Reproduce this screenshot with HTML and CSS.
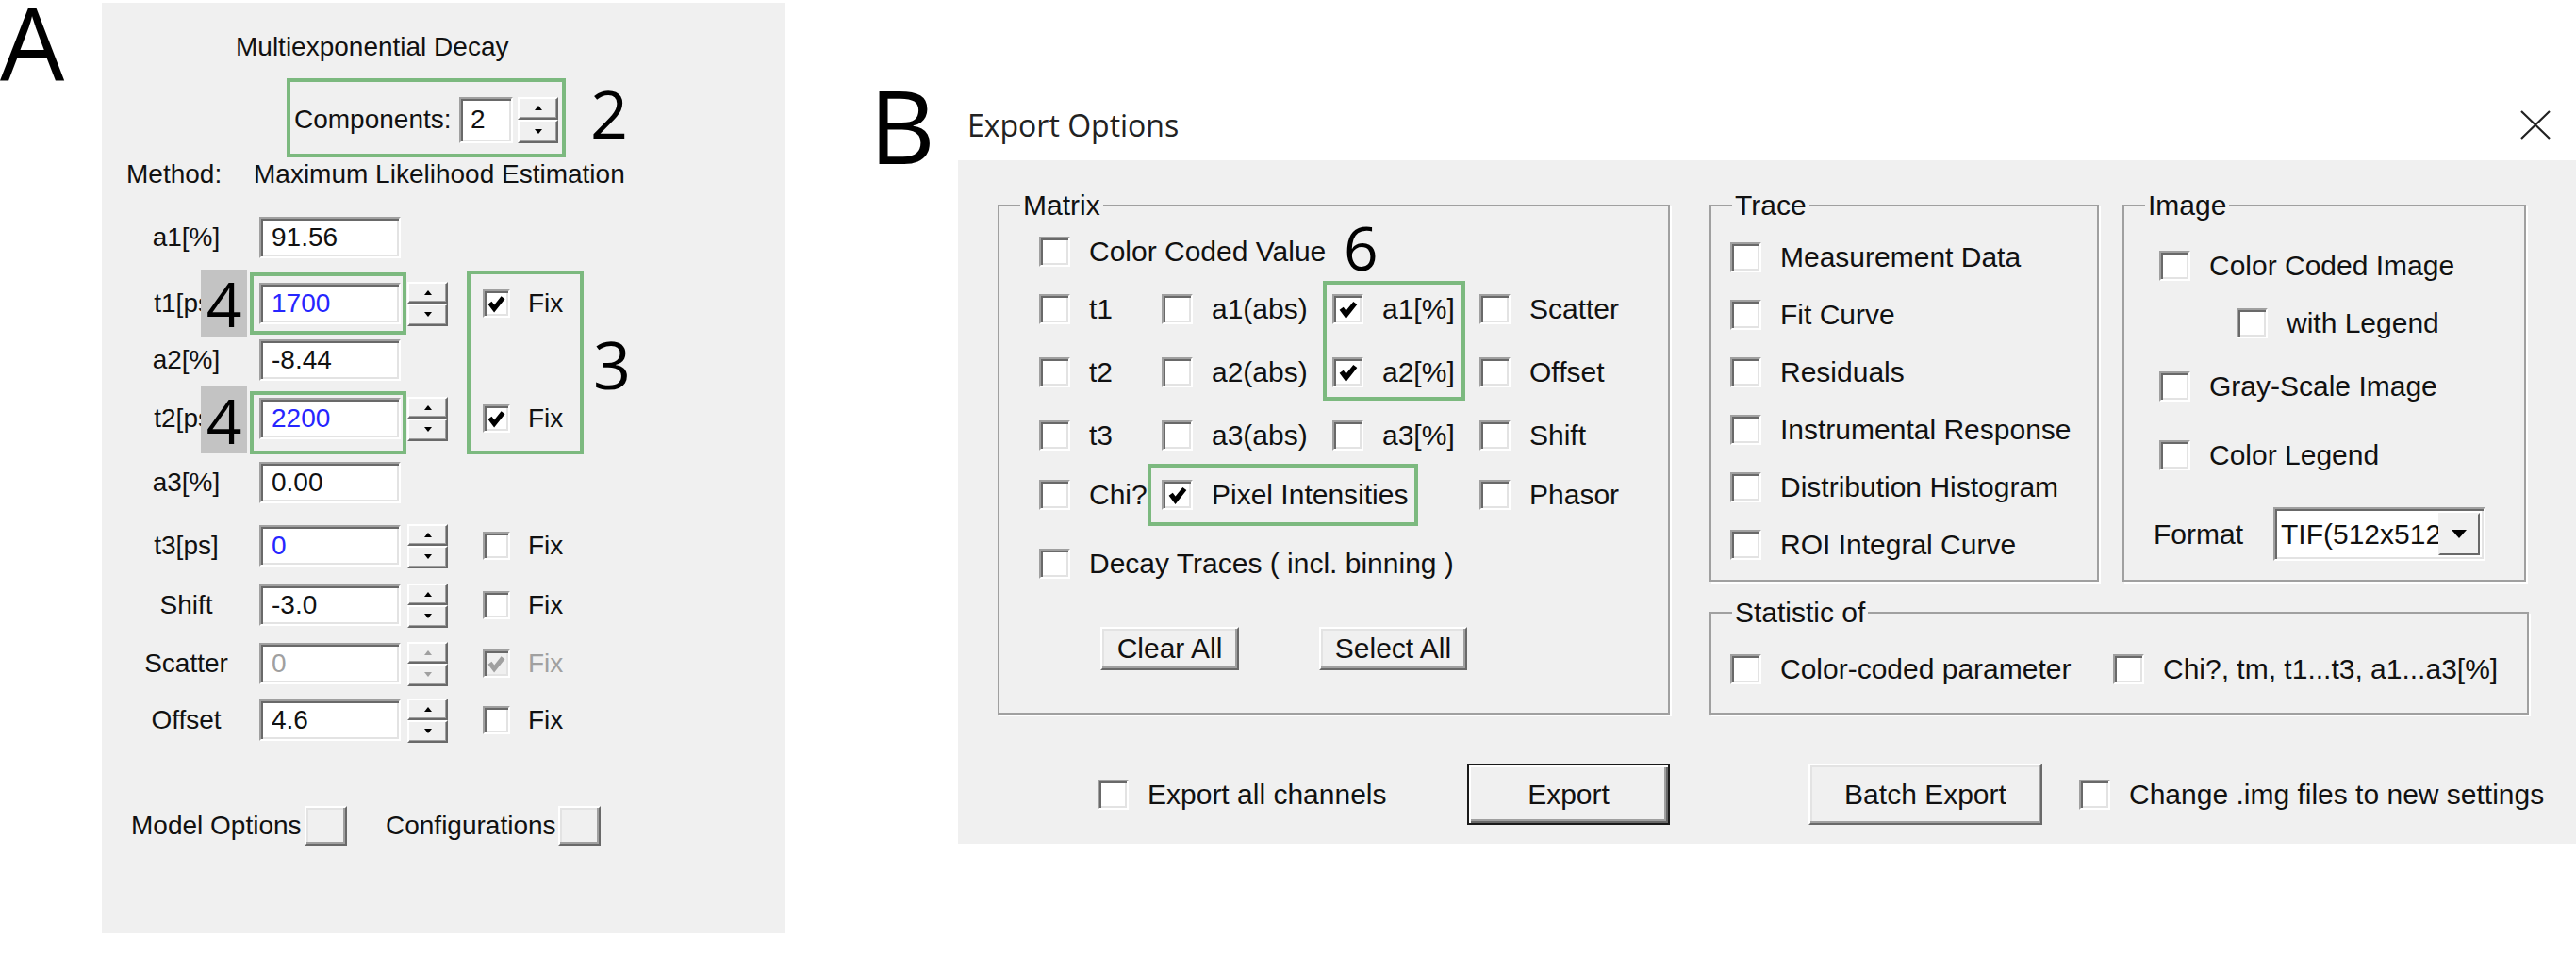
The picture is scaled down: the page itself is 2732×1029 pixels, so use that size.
FILE: index.html
```html
<!DOCTYPE html>
<html lang="en">
<head>
  <meta charset="UTF-8">
  <title>Multiexponential Decay / Export Options</title>
  <link rel="stylesheet" href="styles.css">
</head>
<body>
<div class="page">

  <!-- A: fit parameters -->
  <div class="fig-a">
    <div class="letter">A</div>
    <div class="panel-a">
      <div class="a-title">Multiexponential Decay</div>
      <div class="a-comp">
        <span class="lbl">Components:</span>
        <span class="field">2</span>
        <span class="spin"><span class="spin-btn up"></span><span class="spin-btn down"></span></span>
      </div>
      <div class="a-method"><span class="lbl">Method:</span><span>Maximum Likelihood Estimation</span></div>

      <div class="params">
        <div class="param"><span class="name">a1[%]</span><span class="field">91.56</span></div>
        <div class="param">
          <span class="name">t1[ps]</span><span class="field blue">1700</span>
          <span class="spin"><span class="spin-btn up"></span><span class="spin-btn down"></span></span>
          <span class="check"><svg viewBox="0 0 16 16"><path d="M3.5 7.5 L6.5 11.5 L12.5 4"/></svg></span><span class="fix">Fix</span>
        </div>
        <div class="param"><span class="name">a2[%]</span><span class="field">-8.44</span></div>
        <div class="param">
          <span class="name">t2[ps]</span><span class="field blue">2200</span>
          <span class="spin"><span class="spin-btn up"></span><span class="spin-btn down"></span></span>
          <span class="check"><svg viewBox="0 0 16 16"><path d="M3.5 7.5 L6.5 11.5 L12.5 4"/></svg></span><span class="fix">Fix</span>
        </div>
        <div class="param"><span class="name">a3[%]</span><span class="field">0.00</span></div>
        <div class="param">
          <span class="name">t3[ps]</span><span class="field blue">0</span>
          <span class="spin"><span class="spin-btn up"></span><span class="spin-btn down"></span></span>
          <span class="check"></span><span class="fix">Fix</span>
        </div>
        <div class="param">
          <span class="name">Shift</span><span class="field">-3.0</span>
          <span class="spin"><span class="spin-btn up"></span><span class="spin-btn down"></span></span>
          <span class="check"></span><span class="fix">Fix</span>
        </div>
        <div class="param">
          <span class="name">Scatter</span><span class="field dim">0</span>
          <span class="spin off"><span class="spin-btn up"></span><span class="spin-btn down"></span></span>
          <span class="check off"><svg viewBox="0 0 16 16"><path d="M3.5 7.5 L6.5 11.5 L12.5 4"/></svg></span><span class="fix dim">Fix</span>
        </div>
        <div class="param">
          <span class="name">Offset</span><span class="field">4.6</span>
          <span class="spin"><span class="spin-btn up"></span><span class="spin-btn down"></span></span>
          <span class="check"></span><span class="fix">Fix</span>
        </div>
      </div>

      <div class="a-model">
        <span class="lbl">Model Options</span><span class="btn small"></span>
        <span class="lbl conf">Configurations</span><span class="btn small"></span>
      </div>

      <!-- annotations -->
      <div class="mark box-comp"></div>
      <div class="num num-2">2</div>
      <div class="tag tag-t1">4</div>
      <div class="tag tag-t2">4</div>
      <div class="mark box-t1"></div>
      <div class="mark box-t2"></div>
      <div class="mark box-fix"></div>
      <div class="num num-3">3</div>
    </div>
  </div>

  <!-- B: export dialog -->
  <div class="fig-b">
    <div class="letter">B</div>
    <div class="dialog">
      <div class="titlebar">
        <span>Export Options</span>
        <svg class="close" viewBox="0 0 34 31"><path d="M2 1 L32 30 M32 1 L2 30"/></svg>
      </div>
      <div class="dialog-body">
        <div class="body-top">
          <fieldset class="group matrix">
            <legend>Matrix</legend>
            <div class="matrix-grid">
              <label class="opt wide"><span class="check"></span>Color Coded Value</label>
              <label class="opt"><span class="check"></span>t1</label>
              <label class="opt"><span class="check"></span>a1(abs)</label>
              <label class="opt"><span class="check"><svg viewBox="0 0 16 16"><path d="M3.5 7.5 L6.5 11.5 L12.5 4"/></svg></span>a1[%]</label>
              <label class="opt"><span class="check"></span>Scatter</label>
              <label class="opt"><span class="check"></span>t2</label>
              <label class="opt"><span class="check"></span>a2(abs)</label>
              <label class="opt"><span class="check"><svg viewBox="0 0 16 16"><path d="M3.5 7.5 L6.5 11.5 L12.5 4"/></svg></span>a2[%]</label>
              <label class="opt"><span class="check"></span>Offset</label>
              <label class="opt"><span class="check"></span>t3</label>
              <label class="opt"><span class="check"></span>a3(abs)</label>
              <label class="opt"><span class="check"></span>a3[%]</label>
              <label class="opt"><span class="check"></span>Shift</label>
              <label class="opt"><span class="check"></span>Chi?</label>
              <label class="opt span2"><span class="check"><svg viewBox="0 0 16 16"><path d="M3.5 7.5 L6.5 11.5 L12.5 4"/></svg></span>Pixel Intensities</label>
              <label class="opt"><span class="check"></span>Phasor</label>
              <label class="opt wide"><span class="check"></span>Decay Traces ( incl. binning )</label>
            </div>
            <div class="matrix-btns">
              <button class="btn clear">Clear All</button>
              <button class="btn select">Select All</button>
            </div>
          </fieldset>

          <div class="right-col">
            <div class="right-top">
              <fieldset class="group trace">
                <legend>Trace</legend>
                <div class="trace-list">
                  <label class="opt"><span class="check"></span>Measurement Data</label>
                  <label class="opt"><span class="check"></span>Fit Curve</label>
                  <label class="opt"><span class="check"></span>Residuals</label>
                  <label class="opt"><span class="check"></span>Instrumental Response</label>
                  <label class="opt"><span class="check"></span>Distribution Histogram</label>
                  <label class="opt"><span class="check"></span>ROI Integral Curve</label>
                </div>
              </fieldset>
              <fieldset class="group image">
                <legend>Image</legend>
                <div class="image-grid">
                  <label class="opt"><span class="check"></span>Color Coded Image</label>
                  <label class="opt sub"><span class="check"></span>with Legend</label>
                  <label class="opt"><span class="check"></span>Gray-Scale Image</label>
                  <label class="opt"><span class="check"></span>Color Legend</label>
                  <div class="format">
                    <span class="format-lbl">Format</span>
                    <span class="combo"><span class="combo-text">TIF(512x512)</span><span class="combo-btn"></span></span>
                  </div>
                </div>
              </fieldset>
            </div>
            <fieldset class="group stats">
              <legend>Statistic of</legend>
              <div class="stats-row">
                <label class="opt first"><span class="check"></span>Color-coded parameter</label>
                <label class="opt"><span class="check"></span>Chi?, tm, t1...t3, a1...a3[%]</label>
              </div>
            </fieldset>
          </div>
        </div>

        <div class="bottom-row">
          <label class="opt all"><span class="check"></span>Export all channels</label>
          <button class="btn default export">Export</button>
          <button class="btn batch">Batch Export</button>
          <label class="opt"><span class="check"></span>Change .img files to new settings</label>
        </div>

        <!-- annotations -->
        <div class="num num-6">6</div>
        <div class="mark box-pct"></div>
        <div class="mark box-pix"></div>
      </div>
    </div>
  </div>

</div>
</body>
</html>
```

FILE: styles.css
```css
* {
  box-sizing: border-box;
}
body {
  margin: 0;
  background: #fff;
  color: #111;
  font-family: "Liberation Sans", Arial, sans-serif;
}
.page {
  display: flex;
  align-items: flex-start;
  width: 2732px;
  height: 1029px;
  overflow: hidden;
}
.letter {
  font-family: "Open Sans", sans-serif;
  font-size: 108px;
  line-height: 90px;
  color: #000;
}

/* ---------- A ---------- */
.fig-a {
  display: flex;
  align-items: flex-start;
}
.fig-a .letter {
  width: 108px;
}
.panel-a {
  position: relative;
  width: 725px;
  height: 987px;
  margin-top: 3px;
  background: #f0f0f0;
  font-size: 28px;
  line-height: 34px;
}
.a-title {
  height: 34px;
  margin: 30px 0 0 142px;
}
.a-comp {
  display: flex;
  align-items: center;
  height: 50px;
  margin: 35px 0 0 204px;
}
.a-comp .lbl {
  width: 175px;
}
.a-comp .field {
  width: 57px;
  height: 49px;
  padding-left: 10px;
}
.a-comp .spin {
  width: 43px;
  height: 49px;
  margin-left: 5px;
}
.a-method {
  display: flex;
  height: 34px;
  margin: 16px 0 0 26px;
}
.a-method .lbl {
  width: 135px;
}
.params {
  display: grid;
  grid-template-rows: 70px 60px 62px 68px 67px 63px 62px 60px 44px;
  margin-top: 28px;
  padding-left: 42px;
}
.param {
  display: flex;
  align-items: center;
  height: 44px;
}
.param .name {
  width: 95px;
  text-align: center;
  white-space: nowrap;
}
.param .field {
  width: 150px;
  height: 44px;
  margin-left: 30px;
}
.param .spin {
  width: 43px;
  height: 47px;
  margin-left: 7px;
}
.param .check {
  width: 29px;
  height: 30px;
  margin-left: 37px;
}
.fix {
  margin-left: 19px;
}
.dim {
  color: #a0a0a0;
}
.a-model {
  display: flex;
  align-items: center;
  height: 42px;
  margin: 69px 0 0 31px;
}
.a-model .lbl {
  width: 184px;
  white-space: nowrap;
}
.a-model .conf {
  width: 183px;
  margin-left: 41px;
}
.btn.small {
  width: 45px;
  height: 42px;
}

/* ---------- common controls ---------- */
.field {
  display: flex;
  align-items: center;
  padding-left: 11px;
  background: #fff;
  border: 2px solid;
  border-color: #a0a0a0 #fff #fff #a0a0a0;
  box-shadow: inset 2px 2px 0 #696969, inset -2px -2px 0 #e3e3e3;
  overflow: hidden;
  white-space: nowrap;
}
.field.blue {
  color: #2626ff;
}
.spin {
  display: flex;
  flex-direction: column;
}
.spin-btn {
  flex: 1;
  display: flex;
  align-items: center;
  justify-content: center;
  background: #f0f0f0;
  border: 2px solid;
  border-color: #fff #696969 #696969 #fff;
  box-shadow: inset -1px -1px 0 #a0a0a0;
}
.spin-btn::after {
  content: "";
  border-left: 4px solid transparent;
  border-right: 4px solid transparent;
}
.spin-btn.up::after {
  border-bottom: 5px solid #000;
}
.spin-btn.down::after {
  border-top: 5px solid #000;
}
.spin.off .spin-btn.up::after {
  border-bottom-color: #a0a0a0;
}
.spin.off .spin-btn.down::after {
  border-top-color: #a0a0a0;
}
.check {
  flex: none;
  display: flex;
  align-items: center;
  justify-content: center;
  width: 33px;
  height: 32px;
  background: #fff;
  border: 2px solid;
  border-color: #a0a0a0 #fff #fff #a0a0a0;
  box-shadow: inset 2px 2px 0 #696969, inset -2px -2px 0 #e3e3e3;
}
.check svg {
  width: 26px;
  height: 26px;
  fill: none;
  stroke: #000;
  stroke-width: 3.2;
}
.check.off {
  background: #f0f0f0;
}
.check.off svg {
  stroke: #a0a0a0;
}
.btn {
  display: flex;
  align-items: center;
  justify-content: center;
  padding: 0;
  font: inherit;
  color: #111;
  background: #f0f0f0;
  border: 2px solid;
  border-color: #fff #696969 #696969 #fff;
  box-shadow: inset -2px -2px 0 #a0a0a0, inset 2px 2px 0 #e3e3e3;
}
.btn.default {
  border-color: #1a1a1a;
  box-shadow: inset 2px 2px 0 #fff, inset -2px -2px 0 #696969, inset -4px -4px 0 #a0a0a0;
}

/* ---------- B ---------- */
.fig-b {
  display: flex;
  align-items: flex-start;
  margin-left: 89px;
}
.fig-b .letter {
  width: 94px;
  margin-top: 88px;
}
.dialog {
  width: 1716px;
  margin-top: 95px;
}
.titlebar {
  display: flex;
  align-items: center;
  justify-content: space-between;
  height: 75px;
  padding: 0 26px 0 10px;
  background: #fff;
  font-family: "Open Sans", sans-serif;
  font-size: 32px;
  color: #222;
}
.close {
  width: 34px;
  height: 31px;
  fill: none;
  stroke: #222;
  stroke-width: 2.2;
}
.dialog-body {
  position: relative;
  height: 725px;
  padding: 30px 0 0 42px;
  background: #f0f0f0;
  font-size: 30px;
  line-height: 34px;
}
.body-top {
  display: flex;
  align-items: flex-start;
  gap: 42px;
}
.group {
  margin: 0;
  padding: 0;
  min-width: 0;
  border: 2px solid #a0a0a0;
  box-shadow: 2px 2px 0 #fff;
}
.group legend {
  height: 36px;
  margin-left: 22px;
  padding: 0 3px;
  line-height: 36px;
}
.opt {
  display: flex;
  align-items: center;
  gap: 20px;
  height: 34px;
  white-space: nowrap;
}
.matrix {
  width: 713px;
  padding-bottom: 45px;
}
.matrix-grid {
  display: grid;
  grid-template-columns: 130px 181px 156px 1fr;
  grid-template-rows: 61px 67px 67px 63px 73px 84px;
  padding: 14px 0 0 42px;
}
.matrix-grid .opt {
  align-self: start;
}
.matrix-grid .wide {
  grid-column: 1 / -1;
}
.matrix-grid .span2 {
  grid-column: 2 / 4;
}
.matrix-btns {
  display: flex;
  gap: 85px;
  margin-left: 107px;
}
.btn.clear {
  width: 147px;
  height: 46px;
}
.btn.select {
  width: 157px;
  height: 46px;
}
.right-col {
  width: 869px;
}
.right-top {
  display: flex;
  gap: 25px;
}
.trace {
  width: 413px;
}
.trace-list {
  display: flex;
  flex-direction: column;
  gap: 27px;
  padding: 20px 0 18px 20px;
}
.image {
  width: 428px;
}
.image-grid {
  display: grid;
  grid-template-rows: 61px 67px 73px 72px 57px;
  padding: 29px 0 20px 37px;
}
.image-grid .opt {
  align-self: start;
}
.image-grid .sub {
  margin-left: 82px;
}
.format {
  display: flex;
  align-items: center;
  height: 57px;
  margin-left: -6px;
}
.format-lbl {
  width: 127px;
}
.combo {
  display: flex;
  width: 225px;
  height: 57px;
  background: #fff;
  border: 2px solid;
  border-color: #a0a0a0 #fff #fff #a0a0a0;
  box-shadow: inset 2px 2px 0 #696969, inset -2px -2px 0 #e3e3e3;
  padding: 4px 4px 4px 6px;
}
.combo-text {
  flex: 1;
  overflow: hidden;
  white-space: nowrap;
  line-height: 45px;
}
.combo-btn {
  flex: none;
  display: flex;
  align-items: center;
  justify-content: center;
  width: 44px;
  background: #f0f0f0;
  border: 2px solid;
  border-color: #f0f0f0 #696969 #696969 #f0f0f0;
}
.combo-btn::after {
  content: "";
  border-left: 8px solid transparent;
  border-right: 8px solid transparent;
  border-top: 9px solid #000;
}
.stats {
  width: 869px;
  margin-top: 15px;
}
.stats-row {
  display: flex;
  padding: 25px 0 29px 20px;
}
.stats-row .first {
  width: 406px;
}
.bottom-row {
  display: flex;
  align-items: center;
  height: 65px;
  margin: 52px 0 0 106px;
}
.bottom-row .all {
  width: 392px;
}
.btn.export {
  width: 215px;
  height: 65px;
  margin-right: 147px;
}
.btn.batch {
  width: 248px;
  height: 65px;
  margin-right: 39px;
}

/* ---------- annotations ---------- */
.mark {
  position: absolute;
  border: 4px solid #7cb97f;
}
.num {
  position: absolute;
  font-family: "Open Sans", sans-serif;
  line-height: 70px;
  font-size: 70px;
  color: #000;
}
.tag {
  position: absolute;
  left: 105px;
  width: 49px;
  height: 71px;
  background: #c3c3c3;
  font-family: "Open Sans", sans-serif;
  font-size: 66px;
  line-height: 71px;
  text-align: center;
  color: #000;
}
.box-comp {
  left: 196px;
  top: 80px;
  width: 296px;
  height: 84px;
}
.num-2 {
  left: 518px;
  top: 82px;
}
.tag-t1 {
  top: 283px;
}
.tag-t2 {
  top: 407px;
}
.box-t1 {
  left: 157px;
  top: 286px;
  width: 166px;
  height: 66px;
}
.box-t2 {
  left: 157px;
  top: 412px;
  width: 166px;
  height: 67px;
}
.box-fix {
  left: 387px;
  top: 284px;
  width: 124px;
  height: 195px;
}
.num-3 {
  left: 521px;
  top: 348px;
}
.num-6 {
  left: 409px;
  top: 61px;
  font-size: 64px;
  line-height: 64px;
}
.box-pct {
  left: 387px;
  top: 128px;
  width: 151px;
  height: 127px;
}
.box-pix {
  left: 201px;
  top: 322px;
  width: 287px;
  height: 66px;
}
```
